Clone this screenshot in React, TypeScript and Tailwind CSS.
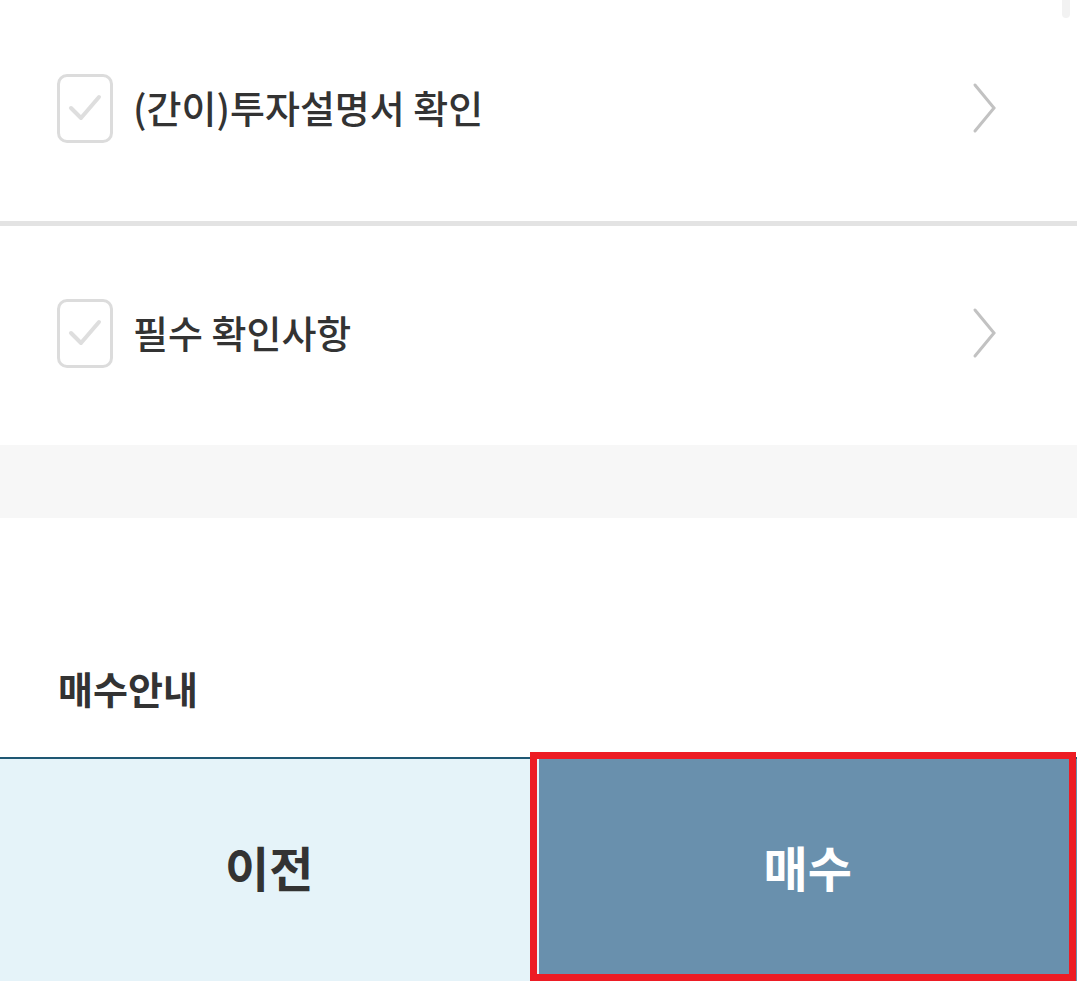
import React from "react";

const font = {
  fontFamily: '"Noto Sans CJK KR", "Noto Sans", sans-serif',
};

const CheckBox = () => {
  return (
    <div className="w-[56px] h-[69px] rounded-[10px] border-[3px] border-[#dcdcdc] bg-white flex items-center justify-center shrink-0">
      <svg width="34" height="30" viewBox="0 0 34 30" fill="none">
        <path
          d="M3 15 L13 25 L31 4"
          stroke="#dedede"
          strokeWidth="4"
          strokeLinecap="round"
          strokeLinejoin="round"
        />
      </svg>
    </div>
  );
};

const Chevron = () => {
  return (
    <svg width="26" height="52" viewBox="0 0 26 52" fill="none">
      <path
        d="M4 3 L23 26 L4 49"
        stroke="#c2c2c2"
        strokeWidth="3"
        strokeLinecap="round"
        strokeLinejoin="miter"
      />
    </svg>
  );
};

const AgreeRow = ({ label, height }: { label: string; height: string }) => {
  return (
    <div className={`flex flex-row items-center pl-[57px] pr-[80px] pb-[5px] ${height}`}>
      <CheckBox />
      <p className="ml-[20px] text-[38px] font-medium text-[#333333] leading-none pb-[2px]">
        {label}
      </p>
      <div className="ml-auto">
        <Chevron />
      </div>
    </div>
  );
};

export default function App() {
  return (
    <div className="relative w-[1077px] h-[981px] bg-white overflow-hidden" style={font}>
      {/* scrollbar stub */}
      <div className="absolute top-0 right-[7px] w-[8px] h-[18px] rounded-b-full bg-[#f2f2f2]"></div>

      <AgreeRow label="(간이)투자설명서 확인" height="h-[221px]" />
      <div className="h-[5px] bg-[#e3e3e3]"></div>
      <AgreeRow label="필수 확인사항" height="h-[219px]" />

      {/* gray band */}
      <div className="h-[73px] bg-[#f7f7f7]"></div>

      {/* 매수안내 */}
      <div className="h-[239px] flex flex-col justify-end pb-[50px] pl-[58px]">
        <h2 className="text-[38px] font-bold text-[#333333] leading-none">매수안내</h2>
      </div>

      {/* bottom buttons */}
      <div className="grid grid-cols-2 h-[224px] border-t-2 border-[#1f5873]">
        <button className="bg-[#e5f3f9] flex items-center justify-center pb-[8px]">
          <span className="text-[48px] font-bold text-[#333333] leading-none">이전</span>
        </button>
        <button className="bg-[#6990ad] flex items-center justify-center pb-[8px]">
          <span className="text-[48px] font-bold text-white leading-none">매수</span>
        </button>
      </div>

      {/* highlight annotation */}
      <div className="absolute left-[530px] top-[752px] w-[546px] h-[229px] border-[7px] border-[#ed1c24] pointer-events-none"></div>
    </div>
  );
}
